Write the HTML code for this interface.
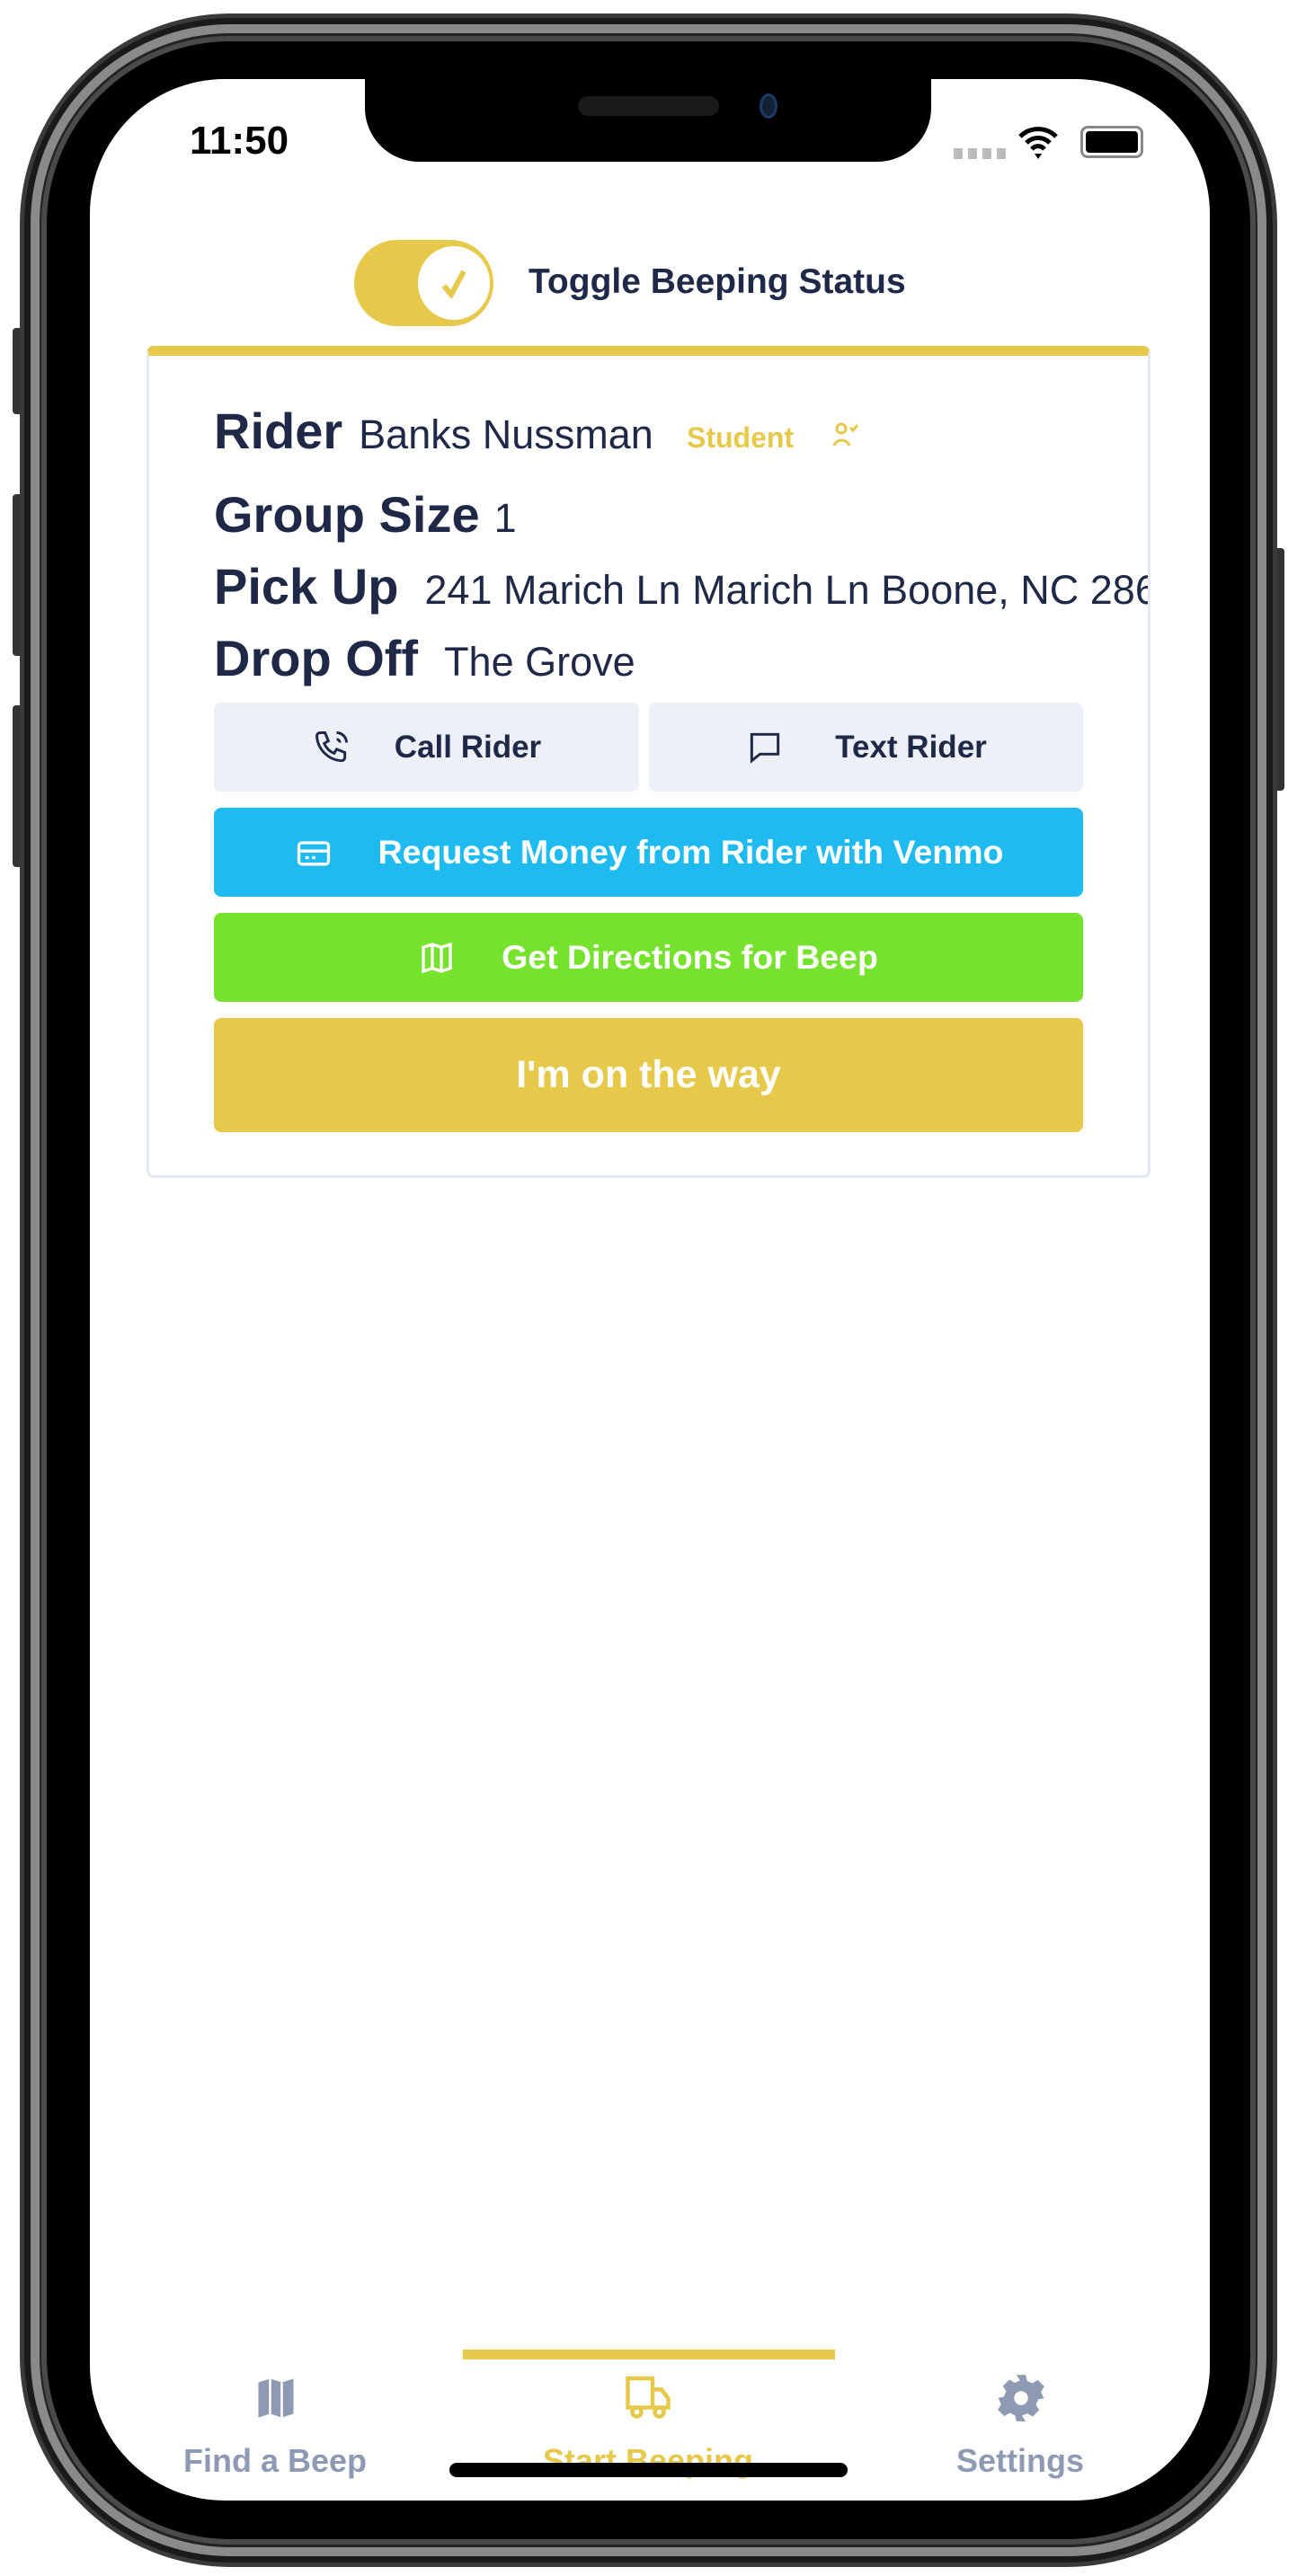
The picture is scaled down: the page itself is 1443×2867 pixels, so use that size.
<!DOCTYPE html>
<html><head><meta charset="utf-8">
<style>
*{margin:0;padding:0;box-sizing:border-box}
body{width:1443px;height:2867px;background:#fff;position:relative;overflow:hidden;font-family:"Liberation Sans",sans-serif}
.abs{position:absolute}
.outer{left:22px;top:15px;width:1399px;height:2842px;border-radius:235px;background:#1a1a1a;border:5px solid #3a3a3a}
.ring{left:34px;top:27px;width:1375px;height:2818px;border-radius:222px;border:10px solid #8a8a8a;background:#222}
.ring2{left:46px;top:40px;width:1351px;height:2792px;border-radius:210px;background:#000;border:6px solid #4a4a4a}
.screen{left:100px;top:88px;width:1246px;height:2695px;border-radius:150px;background:#fff;overflow:hidden}
.notch{left:406px;top:88px;width:630px;height:92px;background:#000;border-radius:0 0 60px 60px}
.btn{border-radius:8px;display:flex;align-items:center;justify-content:center;font-weight:bold;font-size:35px;white-space:nowrap}
.lbl{color:#1f2847;font-weight:bold;font-size:56px}
.val{color:#1f2847;font-size:45px}
.tab{color:#8e9ab3;font-weight:bold;font-size:36px;text-align:center;white-space:nowrap}
</style></head><body>
<div class="abs" style="left:14px;top:365px;width:12px;height:96px;background:#333;border-radius:4px"></div>
<div class="abs" style="left:14px;top:550px;width:12px;height:180px;background:#333;border-radius:4px"></div>
<div class="abs" style="left:14px;top:785px;width:12px;height:180px;background:#333;border-radius:4px"></div>
<div class="abs" style="left:1417px;top:610px;width:12px;height:270px;background:#333;border-radius:4px"></div>
<div class="abs outer"></div>
<div class="abs ring"></div>
<div class="abs ring2"></div>
<div class="abs screen"></div>
<div class="abs notch"></div>
<div class="abs" style="left:643px;top:107px;width:157px;height:22px;background:#1a1a1a;border-radius:11px"></div>
<div class="abs" style="left:845px;top:104px;width:20px;height:28px;background:#123;border-radius:50%;border:3px solid #1e3a6a"></div>
<div class="abs" style="left:211px;top:132px;font-size:44px;font-weight:bold;color:#000">11:50</div>
<div class="abs" style="left:1061px;top:165px;width:60px;height:12px;background:repeating-linear-gradient(90deg,#bbb 0 10px,transparent 10px 16px)"></div>
<svg class="abs" style="left:1132px;top:138px" width="46" height="40" viewBox="0 0 46 40"><path d="M3 14a28 28 0 0 1 40 0M10 21a18 18 0 0 1 26 0M16 28a9 9 0 0 1 14 0" stroke="#000" stroke-width="5" fill="none"/><path d="M19 33l4 6 4-6z" fill="#000"/></svg>
<div class="abs" style="left:1202px;top:140px;width:70px;height:36px;border:3px solid #888;border-radius:8px;padding:3px"><div style="width:100%;height:100%;background:#000;border-radius:4px"></div></div>
<div class="abs" style="left:394px;top:267px;width:155px;height:96px;background:#e6c84a;border-radius:48px"></div>
<div class="abs" style="left:462px;top:271px;width:86px;height:88px;background:#fff;border-radius:50%;border:3px solid #e6c84a"></div>
<svg class="abs" style="left:490px;top:298px" width="30" height="34" viewBox="0 0 30 34"><path d="M4 20l8 10L26 4" stroke="#e6c84a" stroke-width="6" fill="none"/></svg>
<div class="abs" style="left:588px;top:292px;font-size:39px;color:#1f2847;font-weight:bold">Toggle Beeping Status</div>
<div class="abs" style="left:163px;top:385px;width:1117px;height:926px;border:3px solid #e5e9f0;border-top:11px solid #e6c84a;border-radius:8px;background:#fff"></div>
<div class="abs" style="left:238px;top:447px;white-space:nowrap"><span class="lbl">Rider</span><span class="val" style="margin-left:18px">Banks Nussman</span></div>
<div class="abs" style="left:764px;top:469px;color:#e6c84a;font-weight:bold;font-size:32px">Student</div>
<svg class="abs" style="left:925px;top:468px" width="32" height="32" viewBox="0 0 32 32" fill="none" stroke="#e6c84a" stroke-width="3"><circle cx="11" cy="9" r="5"/><path d="M3 28a9 9 0 0 1 17 0M21 8l3 3 5-6"/></svg>
<div class="abs" style="left:238px;top:540px;white-space:nowrap"><span class="lbl">Group Size</span><span class="val" style="margin-left:16px">1</span></div>
<div class="abs" style="left:238px;top:620px;width:1039px;overflow:hidden;white-space:nowrap"><span class="lbl">Pick Up</span><span class="val" style="margin-left:29px">241 Marich Ln Marich Ln Boone, NC 28607</span></div>
<div class="abs" style="left:238px;top:700px;white-space:nowrap"><span class="lbl">Drop Off</span><span class="val" style="margin-left:29px">The Grove</span></div>
<div class="abs btn" style="left:238px;top:782px;width:473px;height:99px;background:#edf0f7;color:#1f2847">
<svg width="44" height="44" viewBox="0 0 24 24" fill="none" stroke="#1f2847" stroke-width="1.6" style="margin-right:48px"><path d="M5 3h3l2 5-2.5 1.5a11 11 0 0 0 6 6L15 13l5 2v3a2 2 0 0 1-2 2A16 16 0 0 1 3 5a2 2 0 0 1 2-2M15 3a6 6 0 0 1 6 6M15 7a2 2 0 0 1 2 2"/></svg>Call Rider</div>
<div class="abs btn" style="left:722px;top:782px;width:483px;height:99px;background:#edf0f7;color:#1f2847">
<svg width="44" height="44" viewBox="0 0 24 24" fill="none" stroke="#1f2847" stroke-width="1.6" style="margin-right:56px"><path d="M4 4h16v12H9l-5 4z"/><path d="M9 10h.01M12 10h.01M15 10h.01" stroke-width="2.2"/></svg>Text Rider</div>
<div class="abs btn" style="left:238px;top:899px;width:967px;height:99px;background:#1fbbf0;color:#fff;font-size:37.5px">
<svg width="44" height="44" viewBox="0 0 24 24" fill="none" stroke="#fff" stroke-width="1.8" style="margin-right:50px"><rect x="3" y="6" width="18" height="13" rx="2"/><path d="M3 11h18M7 15h2M11 15h2"/></svg>Request Money from Rider with Venmo</div>
<div class="abs btn" style="left:238px;top:1016px;width:967px;height:99px;background:#77e22d;color:#fff;font-size:37.5px">
<svg width="40" height="40" viewBox="0 0 24 24" fill="none" stroke="#fff" stroke-width="2" style="margin-right:52px"><path d="M3 5l6-2 6 2 6-2v16l-6 2-6-2-6 2zM9 3v16M15 5v16"/></svg>Get Directions for Beep</div>
<div class="abs btn" style="left:238px;top:1133px;width:967px;height:127px;background:#e6c84a;color:#fff;font-size:43px">I'm on the way</div>
<div class="abs" style="left:515px;top:2615px;width:414px;height:11px;background:#e6c84a"></div>
<svg class="abs" style="left:280px;top:2643px" width="54" height="52" viewBox="0 0 24 24" fill="#8e9ab3"><path d="M3 4l6-2 6 2 6-2v18l-6 2-6-2-6 2z"/><path d="M9 2v18M15 4v18" stroke="#fff" stroke-width="1.2"/></svg>
<div class="abs tab" style="left:156px;top:2718px;width:300px">Find a Beep</div>
<svg class="abs" style="left:690px;top:2637px" width="62" height="60" viewBox="0 0 24 24" fill="none" stroke="#e6c84a" stroke-width="1.8"><path d="M3 4h11v13H3zM14 9h4l3 4v4h-7"/><circle cx="7" cy="19" r="2"/><circle cx="17" cy="19" r="2"/></svg>
<div class="abs tab" style="left:571px;top:2718px;width:300px;color:#e6c84a">Start Beeping</div>
<svg class="abs" style="left:1105px;top:2638px" width="62" height="62" viewBox="0 0 24 24"><path fill="#8e9ab3" d="M10 2h4l.6 2.6 2.3 1 2.3-1.4 2.8 2.8-1.4 2.3 1 2.3L22 12v0l-2.6.6-1 2.3 1.4 2.3-2.8 2.8-2.3-1.4-2.3 1L14 22h-4l-.6-2.6-2.3-1-2.3 1.4-2.8-2.8 1.4-2.3-1-2.3L2 12l2.6-.6 1-2.3-1.4-2.3 2.8-2.8 2.3 1.4 2.3-1z"/><circle cx="12" cy="12" r="3" fill="#fff"/></svg>
<div class="abs tab" style="left:1035px;top:2718px;width:200px">Settings</div>
<div class="abs" style="left:500px;top:2741px;width:443px;height:16px;background:#000;border-radius:8px"></div>
</body></html>
